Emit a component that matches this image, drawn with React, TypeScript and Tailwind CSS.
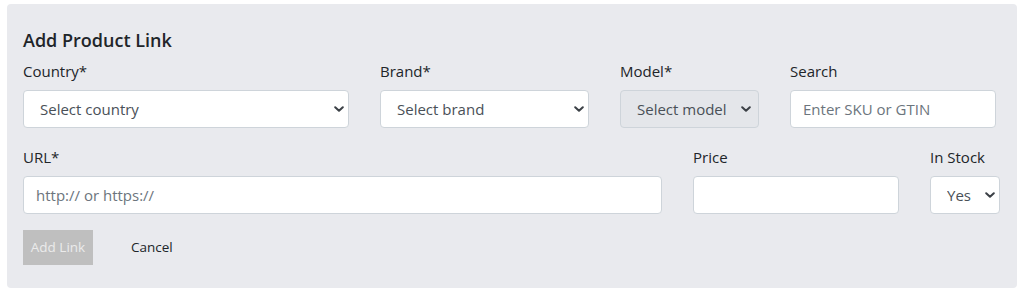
import React from 'react';

const font = { fontFamily: '"Open Sans", "Noto Sans", sans-serif' };

function Chevron({ className = '' }: { className?: string }) {
  return (
    <svg
      className={`pointer-events-none absolute top-1/2 -translate-y-1/2 ${className}`}
      width="10"
      height="6"
      viewBox="0 0 10 6"
      fill="none"
    >
      <path d="M1.2 1.2 L5 4.8 L8.8 1.2" stroke="#3b4046" strokeWidth="2" strokeLinecap="round" strokeLinejoin="round" />
    </svg>
  );
}

function SelectBox({
  width,
  text,
  disabled,
  arrowRight = 'right-[5px]',
}: {
  width: string;
  text: string;
  disabled?: boolean;
  arrowRight?: string;
}) {
  return (
    <div className={`relative ${width}`}>
      <select
        disabled={disabled}
        className={`w-full h-[38px] appearance-none rounded-[4px] border border-[#ced4da] pl-[16px] pr-6 text-[15px] text-[#495057] outline-none ${
          disabled ? 'bg-[#e4e6ea]' : 'bg-white'
        }`}
      >
        <option>{text}</option>
      </select>
      <Chevron className={arrowRight} />
    </div>
  );
}

function Field({ label, children }: { label: string; children: React.ReactNode }) {
  return (
    <div className="flex flex-col">
      <label className="text-[15px] leading-[24px] text-[#212529] mb-[7px]">{label}</label>
      {children}
    </div>
  );
}

export default function App() {
  return (
    <div className="w-[1025px] h-[295px] bg-white pt-[4px] pl-[7px]" style={font}>
      <div className="w-[1010px] h-[284px] rounded-[4px] bg-[#e9eaee] px-4 pt-[23px]">
        <h3 className="text-[18px] leading-[27px] font-semibold text-[#212529]">Add Product Link</h3>

        {/* first row */}
        <div className="flex gap-[31px] mt-[5px]">
          <Field label="Country*">
            <SelectBox width="w-[326px]" text="Select country" />
          </Field>
          <Field label="Brand*">
            <SelectBox width="w-[209px]" text="Select brand" />
          </Field>
          <Field label="Model*">
            <SelectBox width="w-[139px]" text="Select model" disabled arrowRight="right-[8px]" />
          </Field>
          <Field label="Search">
            <input
              type="text"
              placeholder="Enter SKU or GTIN"
              className="w-[206px] h-[38px] rounded-[4px] border border-[#ced4da] bg-white px-3 text-[15px] text-[#495057] placeholder:text-[#6c757d] outline-none"
            />
          </Field>
        </div>

        {/* second row */}
        <div className="flex gap-[31px] mt-[17px]">
          <Field label="URL*">
            <input
              type="text"
              placeholder="http:// or https://"
              className="w-[639px] h-[38px] rounded-[4px] border border-[#ced4da] bg-white px-3 text-[15px] text-[#495057] placeholder:text-[#6c757d] outline-none"
            />
          </Field>
          <Field label="Price">
            <input
              type="text"
              className="w-[206px] h-[38px] rounded-[4px] border border-[#ced4da] bg-white px-3 text-[15px] text-[#495057] outline-none"
            />
          </Field>
          <Field label="In Stock">
            <SelectBox width="w-[70px]" text="Yes" />
          </Field>
        </div>

        <div className="flex items-center mt-[16px]">
          <button
            disabled
            className="w-[70px] h-[35px] bg-[#bfbfbf] text-[13.5px] text-[#ebebeb]"
          >
            Add Link
          </button>
          <button className="ml-[38px] text-[13.5px] text-[#212529]">Cancel</button>
        </div>
      </div>
    </div>
  );
}
